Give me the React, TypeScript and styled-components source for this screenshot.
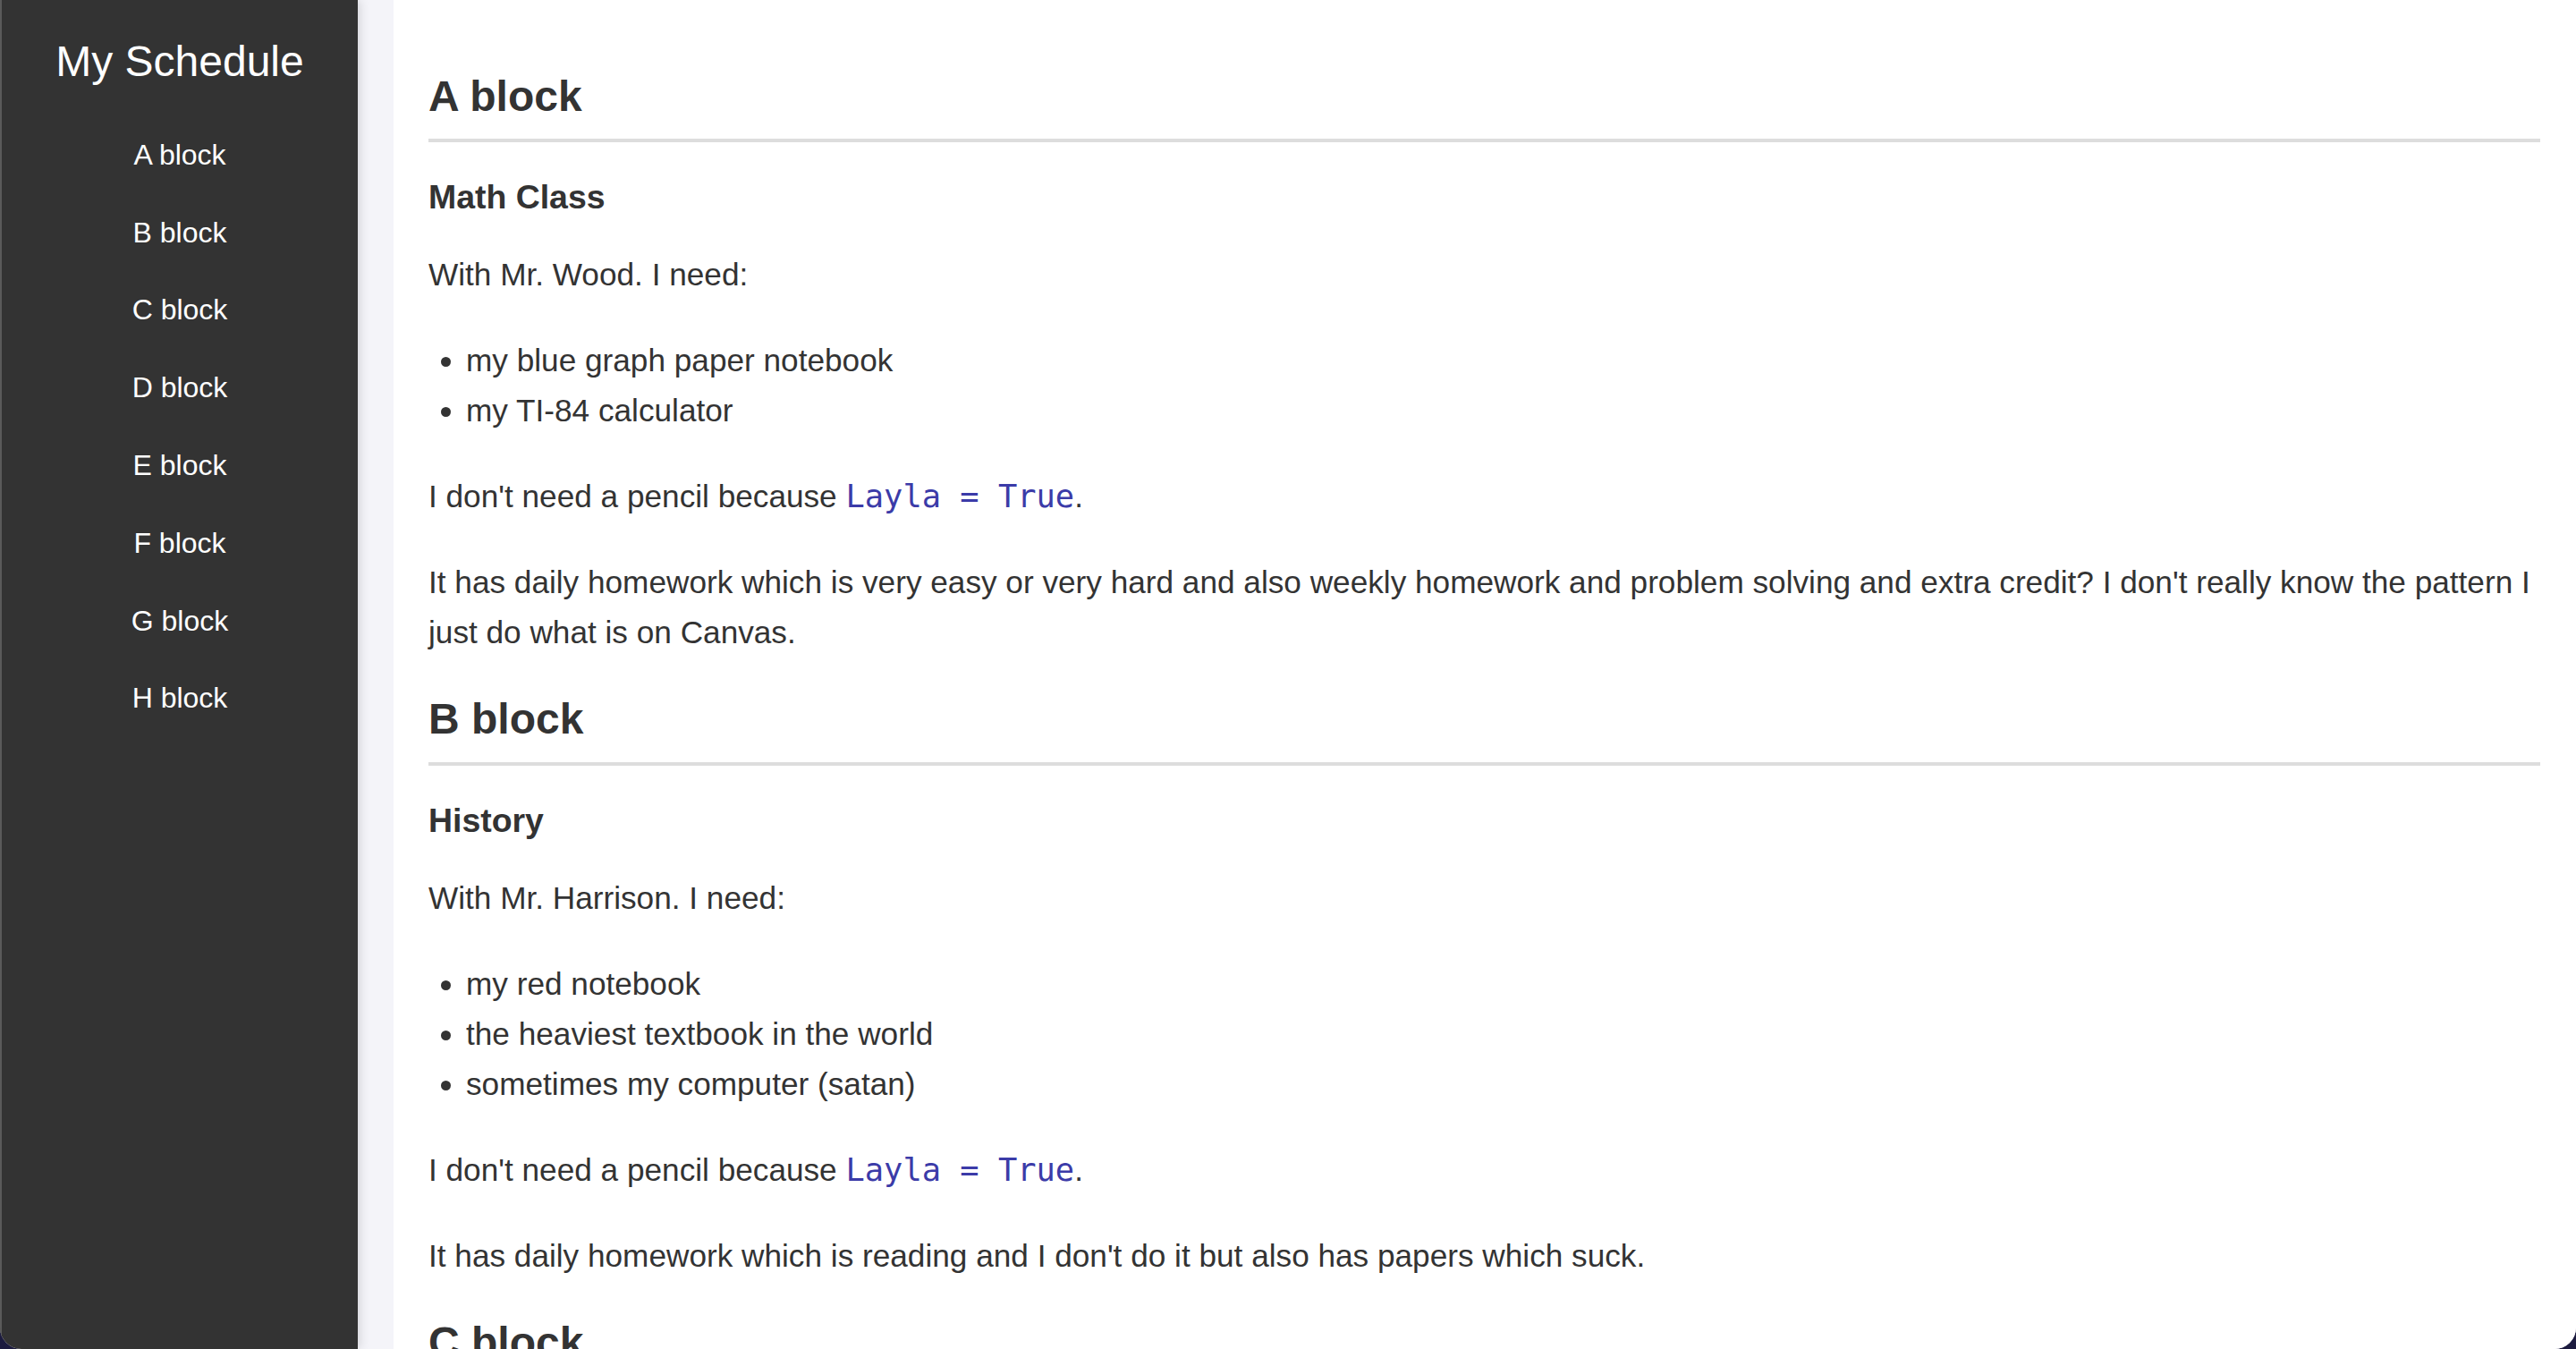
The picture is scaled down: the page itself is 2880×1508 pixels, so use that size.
import React from "react";
import styled, { createGlobalStyle } from "styled-components";

const GlobalStyle = createGlobalStyle`
  html, body {
    margin: 0;
    padding: 0;
    height: 100%;
    background: #1c1b3f;
  }
  #root {
    height: 100%;
  }
`;

// whole browser window, rounded at the bottom like the mac frame
const Window = styled.div`
  display: flex;
  height: 100vh;
  overflow: hidden;
  border-radius: 0 0 24px 24px;
  background: #f4f4f9;
  font-family: "Liberation Sans", Arial, Helvetica, sans-serif;
  color: #333;
`;

const Sidebar = styled.nav`
  flex: 0 0 400px;
  box-sizing: border-box;
  background: #333;
  border-left: 2px solid #5a5a5a;
  box-shadow: 3px 0 10px rgba(0, 0, 0, 0.12);
  text-align: center;
  position: relative;
  z-index: 1;
`;

const SiteTitle = styled.h1`
  margin: 39.6px 0 32.6px;
  font-size: 48px;
  font-weight: 400;
  line-height: 57.6px;
  color: #fff;
`;

const NavList = styled.ul`
  list-style: none;
  margin: 0;
  padding: 0;
`;

const NavLink = styled.a`
  display: block;
  padding: 24px 0;
  font-size: 32px;
  line-height: 38.8px;
  color: #fff;
  text-decoration: none;
`;

const Main = styled.main`
  flex: 1;
  min-width: 0;
  margin-left: 40px;
  padding: 39.6px 40px 0 39px;
  background: #fff;
  overflow: hidden;
  font-size: 35.2px;
  line-height: 56px;
`;

const BlockTitle = styled.h2`
  margin: 39px 0 0;
  padding-bottom: 19px;
  border-bottom: 4px solid #ddd;
  font-size: 48px;
  font-weight: 700;
  line-height: 57.6px;
`;

const ClassName = styled.h3`
  margin: 38.9px 0 0;
  font-size: 37.44px;
  font-weight: 700;
  line-height: 44.9px;
`;

const Para = styled.p`
  margin: 36.3px 0 40px;
`;

const NeedList = styled.ul`
  margin: 40px 0;
  padding-left: 42px;
`;

const Code = styled.code`
  font-family: "DejaVu Sans Mono", "Liberation Mono", monospace;
  font-size: 35.4px;
  color: #3b3ba8;
`;

interface Block {
  id: string;
  title: string;
  subject?: string;
  teacher?: string;
  needs?: string[];
  homework?: string;
}

const blocks: Block[] = [
  {
    id: "a",
    title: "A block",
    subject: "Math Class",
    teacher: "Mr. Wood",
    needs: ["my blue graph paper notebook", "my TI-84 calculator"],
    homework:
      "It has daily homework which is very easy or very hard and also weekly homework and problem solving and extra credit? I don't really know the pattern I just do what is on Canvas.",
  },
  {
    id: "b",
    title: "B block",
    subject: "History",
    teacher: "Mr. Harrison",
    needs: [
      "my red notebook",
      "the heaviest textbook in the world",
      "sometimes my computer (satan)",
    ],
    homework:
      "It has daily homework which is reading and I don't do it but also has papers which suck.",
  },
  { id: "c", title: "C block" },
];

const navItems = ["A", "B", "C", "D", "E", "F", "G", "H"];

export default function App() {
  return (
    <>
      <GlobalStyle />
      <Window>
        <Sidebar>
          <SiteTitle>My Schedule</SiteTitle>
          <NavList>
            {navItems.map((letter) => (
              <li key={letter}>
                <NavLink href={`#${letter.toLowerCase()}`}>{letter} block</NavLink>
              </li>
            ))}
          </NavList>
        </Sidebar>

        <Main>
          {blocks.map((block) => (
            <section key={block.id} id={block.id}>
              <BlockTitle>{block.title}</BlockTitle>
              {block.subject && <ClassName>{block.subject}</ClassName>}
              {block.teacher && <Para>With {block.teacher}. I need:</Para>}
              {block.needs && (
                <NeedList>
                  {block.needs.map((item) => (
                    <li key={item}>{item}</li>
                  ))}
                </NeedList>
              )}
              {block.needs && (
                <Para>
                  I don't need a pencil because <Code>Layla = True</Code>.
                </Para>
              )}
              {block.homework && <Para>{block.homework}</Para>}
            </section>
          ))}
        </Main>
      </Window>
    </>
  );
}
